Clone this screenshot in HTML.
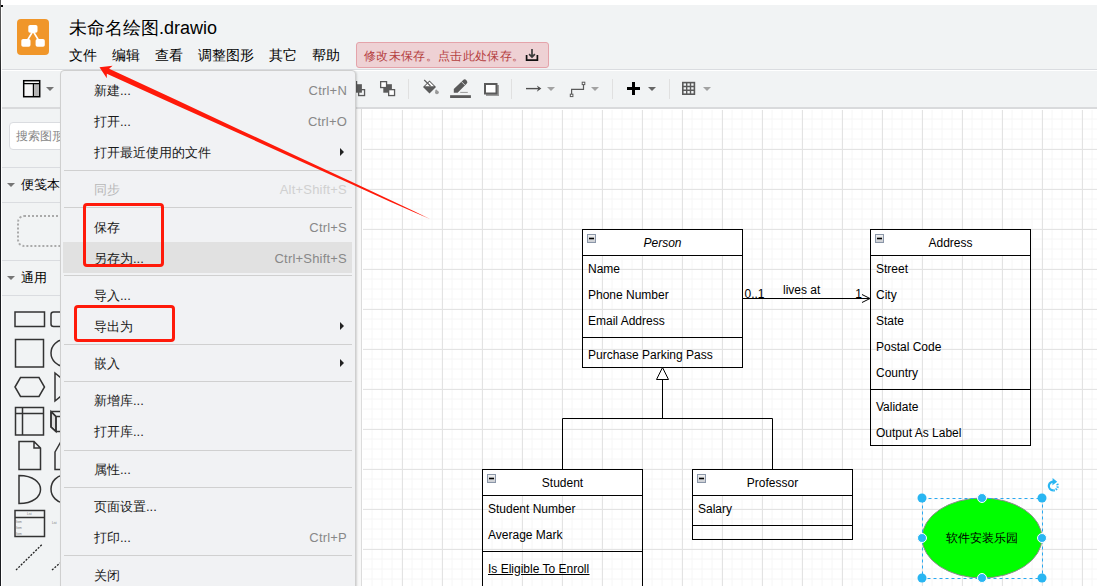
<!DOCTYPE html>
<html><head><meta charset="utf-8">
<style>
*{margin:0;padding:0;box-sizing:border-box}
html,body{width:1097px;height:586px;overflow:hidden;background:#fff;font-family:"Liberation Sans",sans-serif;position:relative}
.a{position:absolute}
#app{left:2px;top:5px;width:1095px;height:581px;background:#f1f3f4}
#lcol{left:0;top:0;width:1px;height:586px;background:linear-gradient(#5c5c5c 0,#4a4a4a 40px,#1a1c20 80px,#1a1c20 100%)}
#dot{left:1px;top:5px;width:2px;height:2px;background:#000}
.title{left:69px;top:15.5px;font-size:18px;color:#000;white-space:nowrap;line-height:24px}
.mi{top:46.5px;font-size:14px;color:#000;line-height:17px;white-space:nowrap}
.hl{height:1px;background:#dadce0}
#canvas{left:362px;top:109px;width:735px;height:477px;background:#fff}
.menu{left:60px;top:70px;width:296px;height:530px;background:#f1f2f4;border:1px solid #cfcfcf;border-radius:4px;box-shadow:1px 1px 2px rgba(0,0,0,.15)}
.it{left:94px;font-size:13px;color:#333;white-space:nowrap;line-height:16px}
.sc{right:750px;font-size:13px;color:#888;white-space:nowrap;line-height:16px;letter-spacing:.2px}
.sep{left:64px;width:288px;height:1px;background:#d0d0d0}
.arr{left:340px;width:0;height:0;border-top:4px solid transparent;border-bottom:4px solid transparent;border-left:4px solid #222}
.red{border:3px solid #ff1a0a;border-radius:4px}
.ut{font-size:12px;color:#000;white-space:nowrap;line-height:14px}
</style></head><body>
<div id="app" class="a"></div>
<div id="lcol" class="a"></div>
<div id="dot" class="a"></div>

<!-- logo -->
<svg class="a" style="left:17px;top:19px" width="32" height="36" viewBox="0 0 32 36">
<rect x="0" y="0" width="32" height="36" rx="4" fill="#f0962a"/>
<path d="M16 12 L10 22 M16 12 L22 22" stroke="#fff" stroke-width="1.6" fill="none"/>
<rect x="11.3" y="6" width="9.2" height="7.8" rx="1.8" fill="#fff"/>
<rect x="4.3" y="20" width="9.2" height="7.7" rx="1.8" fill="#fff"/>
<rect x="18.6" y="20" width="9.2" height="7.7" rx="1.8" fill="#fff"/>
</svg>
<div class="a title">未命名绘图.drawio</div>
<div class="a mi" style="left:69px">文件</div>
<div class="a mi" style="left:112px">编辑</div>
<div class="a mi" style="left:155px">查看</div>
<div class="a mi" style="left:198px">调整图形</div>
<div class="a mi" style="left:269px">其它</div>
<div class="a mi" style="left:312px">帮助</div>
<div class="a" style="left:356px;top:42px;width:193px;height:26px;background:#eed1d4;border:1px solid #e4a3aa;border-radius:3px"></div>
<div class="a" style="left:364px;top:48px;font-size:12px;color:#b5403f;line-height:16px;white-space:nowrap;letter-spacing:.35px">修改未保存。点击此处保存。</div>
<svg class="a" style="left:520px;top:44px" width="24" height="20" viewBox="520 44 24 20"><path d="M526.6 55 V60.2 H537.4 V55" stroke="#111" stroke-width="1.7" fill="none"/><path d="M532 49 V57 M529.1 54.2 L532 57.1 L534.9 54.2" stroke="#3a3a3a" stroke-width="1.7" fill="none"/></svg>

<div class="a hl" style="left:2px;top:69px;width:1095px"></div>
<div class="a" style="left:2px;top:70px;width:1095px;height:1px;background:#fff"></div>
<div class="a" style="left:2px;top:107px;width:1095px;height:2px;background:#d9dadc"></div>


<!-- toolbar left -->
<svg class="a" style="left:20px;top:77px" width="24" height="24" viewBox="20 77 24 24">
<rect x="23.7" y="80.7" width="16" height="16" fill="#f6f6f6" stroke="#000" stroke-width="1.5"/>
<rect x="33.8" y="84" width="5.2" height="12" fill="#b4b4b4"/>
<path d="M23.7 83.6 H39.7 M33.4 83.6 V96.7" stroke="#000" stroke-width="1.2"/>
</svg>
<div class="a" style="left:46px;top:87px;width:0;height:0;border-left:4px solid transparent;border-right:4px solid transparent;border-top:4px solid #757575"></div>

<!-- sidebar -->
<div class="a" style="left:9px;top:122px;width:80px;height:28px;background:#fff;border:1px solid #dadce0;border-radius:4px"></div>
<div class="a" style="left:16px;top:128px;font-size:12px;color:#888;line-height:16px;white-space:nowrap">搜索图形</div>
<div class="a hl" style="left:2px;top:167px;width:353px"></div>
<div class="a" style="left:7px;top:183px;width:0;height:0;border-left:4px solid transparent;border-right:4px solid transparent;border-top:4px solid #757575"></div>
<div class="a" style="left:21px;top:177px;font-size:13px;color:#000;line-height:16px;white-space:nowrap">便笺本</div>
<div class="a hl" style="left:2px;top:202px;width:353px"></div>
<div class="a" style="left:17px;top:215px;width:60px;height:32px;border:2px dotted #aaa;border-radius:7px"></div>
<div class="a hl" style="left:2px;top:260px;width:353px"></div>
<div class="a" style="left:7px;top:276px;width:0;height:0;border-left:4px solid transparent;border-right:4px solid transparent;border-top:4px solid #757575"></div>
<div class="a" style="left:21px;top:270px;font-size:13px;color:#000;line-height:16px;white-space:nowrap">通用</div>
<div class="a hl" style="left:2px;top:295px;width:353px"></div>
<svg class="a" style="left:0;top:300px" width="62" height="286" viewBox="0 300 62 286">
<g fill="none" stroke="#333" stroke-width="1.5">
<rect x="15" y="312" width="29.5" height="14.5"/>
<rect x="51" y="312" width="20" height="14.5" rx="2.5"/>
<rect x="15.5" y="339.5" width="28" height="27.5"/>
<ellipse cx="65" cy="353" rx="14" ry="13.5"/>
<path d="M15 387 L20.5 377.5 H39 L44.5 387 L39 396.5 H20.5 Z"/>
<path d="M55 373 L72 387 L55 401 Z"/>
<rect x="15.5" y="407.5" width="28" height="27.5"/>
<path d="M15.5 413.5 H43.5 M22.5 407.5 V435"/>
<path d="M51 411.5 L56 416.5 V431.5 L51 427 Z" fill="#dedede"/><path d="M51 411.5 H64 M51 411.5 V427 L56 431.5 H64 M51 411.5 L56 416.5 H64 M56 416.5 V431.5"/>
<path d="M19 441.5 H34 L40.5 448 V469.5 H19 Z M34 441.5 V448 H40.5"/>
<path d="M55 452 L61 441.5 H70 V469.5 H55 Z"/>
<path d="M19 475.5 C47.7 475.5 47.7 503.5 19 503.5 Z"/>
<ellipse cx="65" cy="489" rx="14" ry="14"/>
<rect x="15" y="510.5" width="29.5" height="26"/>
<path d="M15 517.5 H44.5"/>
</g>
<g fill="none" stroke="#222" stroke-width="1.3" stroke-dasharray="2 1.4">
<path d="M16 570 L42 544.5"/>
<path d="M52 570 L60 563"/>
</g>
<g font-size="3" fill="#777" font-family="Liberation Sans, sans-serif"><text x="27" y="515">List</text><text x="16" y="523">Item</text><text x="16" y="529">Item</text><text x="16" y="535">Item</text><text x="52" y="524">List</text></g>
</svg>

<!-- splitter -->
<div class="a" style="left:355px;top:109px;width:1px;height:477px;background:#d6d6d6"></div>
<div class="a" style="left:356px;top:109px;width:5px;height:477px;background:#f8f8f8"></div>
<div class="a" style="left:361px;top:109px;width:1px;height:477px;background:#dcdcdc"></div>
<svg id="cv" class="a" style="left:362px;top:109px" width="735" height="477" viewBox="362 109 735 477">
<defs>
<pattern id="gmin" x="362" y="109" width="10" height="10" patternUnits="userSpaceOnUse"><path d="M0 0 H10 M0 0 V10 M0 10 H10 M10 0 V10" stroke="#f6f6f6" stroke-width="1" fill="none"/></pattern>
<pattern id="gmaj" x="362" y="109" width="40" height="40" patternUnits="userSpaceOnUse"><path d="M0 0.5 H40 M0.5 0 V40" stroke="#e3e3e3" stroke-width="1" fill="none"/></pattern>
<linearGradient id="cg" x1="0" y1="0" x2="0" y2="1"><stop offset="0" stop-color="#f4f4f4"/><stop offset="1" stop-color="#c8cbd0"/></linearGradient>
</defs>
<rect x="362" y="109" width="735" height="477" fill="#fff"/>
<rect x="363" y="110" width="734" height="476" fill="url(#gmin)"/>
<rect x="363" y="110" width="734" height="476" fill="url(#gmaj)"/>

<g font-family="Liberation Sans" font-size="12" fill="#000">
<!-- Person -->
<rect x="582.5" y="229.5" width="160" height="26" fill="#fff" stroke="none"/>
<rect x="582.5" y="229.5" width="160" height="138" fill="none" stroke="#000" stroke-width="1"/>
<path d="M582.5 255.5 H742.5 M582.5 337.5 H742.5" stroke="#000" stroke-width="1"/>
<rect x="587.5" y="234.5" width="8" height="8" fill="url(#cg)" stroke="#8a96a8" stroke-width="1"/><path d="M589 238.5 H594" stroke="#000" stroke-width="1.6"/>
<text x="662.5" y="247" text-anchor="middle" font-style="italic">Person</text>
<text x="588" y="273">Name</text>
<text x="588" y="299">Phone Number</text>
<text x="588" y="325">Email Address</text>
<text x="588" y="359">Purchase Parking Pass</text>
<!-- Address -->
<rect x="870.5" y="229.5" width="160" height="26" fill="#fff" stroke="none"/>
<rect x="870.5" y="229.5" width="160" height="216" fill="none" stroke="#000" stroke-width="1"/>
<path d="M870.5 255.5 H1030.5 M870.5 389.5 H1030.5" stroke="#000" stroke-width="1"/>
<rect x="875.5" y="234.5" width="8" height="8" fill="url(#cg)" stroke="#8a96a8" stroke-width="1"/><path d="M877 238.5 H882" stroke="#000" stroke-width="1.6"/>
<text x="950.5" y="247" text-anchor="middle">Address</text>
<text x="876" y="273">Street</text>
<text x="876" y="299">City</text>
<text x="876" y="325">State</text>
<text x="876" y="351">Postal Code</text>
<text x="876" y="377">Country</text>
<text x="876" y="411">Validate</text>
<text x="876" y="437">Output As Label</text>
<!-- Student -->
<rect x="482.5" y="469.5" width="160" height="26" fill="#fff" stroke="none"/>
<rect x="482.5" y="469.5" width="160" height="140" fill="none" stroke="#000" stroke-width="1"/>
<path d="M482.5 495.5 H642.5 M482.5 551.5 H642.5" stroke="#000" stroke-width="1"/>
<rect x="487.5" y="474.5" width="8" height="8" fill="url(#cg)" stroke="#8a96a8" stroke-width="1"/><path d="M489 478.5 H494" stroke="#000" stroke-width="1.6"/>
<text x="562.5" y="487" text-anchor="middle">Student</text>
<text x="488" y="513">Student Number</text>
<text x="488" y="539">Average Mark</text>
<text x="488" y="573">Is Eligible To Enroll</text>
<path d="M488 574.5 H512.8 M521 574.5 H589.5" stroke="#000" stroke-width="1"/>
<!-- Professor -->
<rect x="692.5" y="469.5" width="160" height="26" fill="#fff" stroke="none"/>
<rect x="692.5" y="469.5" width="160" height="70" fill="none" stroke="#000" stroke-width="1"/>
<path d="M692.5 495.5 H852.5 M692.5 525.5 H852.5" stroke="#000" stroke-width="1"/>
<rect x="697.5" y="474.5" width="8" height="8" fill="url(#cg)" stroke="#8a96a8" stroke-width="1"/><path d="M699 478.5 H704" stroke="#000" stroke-width="1.6"/>
<text x="772.5" y="487" text-anchor="middle">Professor</text>
<text x="698" y="513">Salary</text>
<!-- edges -->
<path d="M742.5 298.5 H869" stroke="#000" stroke-width="1" fill="none"/>
<path d="M862 294.5 L870 298.5 L862 302.5" stroke="#000" stroke-width="1" fill="none"/>
<text x="744.5" y="298">0..1</text>
<text x="862" y="298" text-anchor="end">1</text>
<text x="783" y="294">lives at</text>
<path d="M662.5 379.5 V418.5 M562.5 469.5 V418.5 H772.5 V469.5" stroke="#000" stroke-width="1" fill="none"/>
<path d="M662.5 367.5 L668.5 379.5 H656.5 Z" stroke="#000" stroke-width="1" fill="#fff"/>
<!-- ellipse -->
<ellipse cx="982" cy="538" rx="60" ry="40" fill="#00ff00" stroke="#8c8c8c" stroke-width="1"/>
<text x="982" y="542" text-anchor="middle" font-size="12">软件安装乐园</text>
<rect x="922.5" y="498.5" width="120" height="80" fill="none" stroke="#29a8f0" stroke-width="1" stroke-dasharray="3 3"/>
<g fill="#29b6f2"><circle cx="922" cy="498" r="4.5"/><circle cx="1042" cy="498" r="4.5"/><circle cx="922" cy="578" r="4.5"/><circle cx="1042" cy="578" r="4.5"/></g>
<g fill="#29b6f2" stroke="#fff" stroke-width="1"><circle cx="982" cy="498" r="4.5"/><circle cx="982" cy="578" r="4.5"/><circle cx="922" cy="538" r="4.5"/><circle cx="1042" cy="538" r="4.5"/></g>
<g fill="none" stroke="#29b6f2" stroke-width="2.2"><path d="M1054.8 481.9 A4.4 4.4 0 1 0 1053.3 490.4"/><path d="M1053.3 490.4 A4.4 4.4 0 0 0 1057.1 483.8" stroke-dasharray="1.5 1"/></g>
<path d="M1052.6 478 L1057.2 481.8 L1052.4 485.3 Z" fill="#29b6f2"/>
</g>
</svg>

<!-- toolbar icons -->
<svg class="a" style="left:340px;top:72px" width="400" height="34" viewBox="340 72 400 34">
<g stroke="#5a5a5a" stroke-width="1.3">
<rect x="350.65" y="81.65" width="5.9" height="5.9" fill="#fff"/>
<rect x="358.65" y="89.65" width="5.9" height="5.9" fill="none"/>
</g>
<rect x="353.3" y="84.2" width="8.6" height="8.5" fill="#5a5a5a"/>
<rect x="383.3" y="84.2" width="8.6" height="8.5" fill="#5a5a5a"/>
<g stroke="#5a5a5a" stroke-width="1.3">
<rect x="380.65" y="81.65" width="5.9" height="5.9" fill="#fff"/>
<rect x="388.65" y="89.65" width="5.9" height="5.9" fill="#fff"/>
</g>
<g fill="#e0e0e0"><rect x="408" y="79" width="1" height="20"/><rect x="511" y="79" width="1" height="20"/><rect x="612" y="79" width="1" height="20"/><rect x="669" y="79" width="1" height="20"/></g>
<!-- fill -->
<path d="M423 87 L429.5 80.5 L436 87 L429.5 93.5 Z" fill="#5a5a5a"/>
<path d="M425 86.2 L429.5 81.8 L434 86.2 Z" fill="#fff"/>
<path d="M424.2 80 L430.5 86" stroke="#5a5a5a" stroke-width="1.1"/>
<circle cx="436.9" cy="92.3" r="1.9" fill="#9a9a9a"/>
<path d="M436.2 89.2 L437.6 91.2 H434.8 Z" fill="#9a9a9a"/>
<!-- pencil -->
<path d="M453.8 89 V92.8 H457.6 L466.6 83.8 A2.4 2.4 0 0 0 466.6 80.4 L466.4 80.2 A2.4 2.4 0 0 0 463 80.2 Z" fill="#5a5a5a"/>
<path d="M461.3 81.5 L465.1 85.3" stroke="#f1f3f4" stroke-width="0.8"/>
<rect x="460.2" y="91.9" width="7.6" height="1" fill="#9a9a9a"/>
<rect x="450.1" y="95.2" width="20.8" height="2.8" fill="#5a5a5a"/>
<!-- shadow -->
<rect x="486" y="85" width="13" height="11" fill="#9a9a9a"/>
<rect x="485" y="84" width="11.5" height="9.5" fill="#fff" stroke="#5a5a5a" stroke-width="2"/>
<!-- arrow -->
<path d="M526 88.6 H540" stroke="#505050" stroke-width="1.4"/>
<path d="M536.8 85.4 L541.4 88.6 L536.8 91.8 L538.3 88.6 Z" fill="#505050"/>
<path d="M547 87 H555 L551 91 Z" fill="#a2a2a2"/>
<!-- waypoint -->
<path d="M571.6 94 V89.3 H583.5 V84.5" stroke="#5a5a5a" stroke-width="1.2" fill="none"/>
<rect x="570.3" y="94.2" width="2.6" height="2.4" fill="#fff" stroke="#5a5a5a" stroke-width="1"/>
<rect x="582.2" y="82.2" width="2.6" height="2.4" fill="#fff" stroke="#5a5a5a" stroke-width="1"/>
<path d="M591 87 H599 L595 91 Z" fill="#a2a2a2"/>
<!-- plus -->
<path d="M627 88.5 H640 M633.5 82 V95" stroke="#000" stroke-width="3"/>
<path d="M648 87 H656 L652 91 Z" fill="#666"/>
<!-- table -->
<rect x="682.8" y="82.6" width="11.6" height="11.6" fill="none" stroke="#5a5a5a" stroke-width="1.6"/>
<path d="M686.7 82.6 V94.2 M690.5 82.6 V94.2 M682.8 86.5 H694.4 M682.8 90.3 H694.4" stroke="#5a5a5a" stroke-width="1.4"/>
<path d="M703 87 H711 L707 91 Z" fill="#a2a2a2"/>
</svg>
<!-- menu -->
<div class="a menu"></div>
<div class="a" style="left:63px;top:242px;width:289px;height:31px;background:#e1e1e1"></div>
<div class="a sep" style="top:170px"></div>
<div class="a sep" style="top:207px"></div>
<div class="a sep" style="top:275px"></div>
<div class="a sep" style="top:344px"></div>
<div class="a sep" style="top:381px"></div>
<div class="a sep" style="top:450px"></div>
<div class="a sep" style="top:487px"></div>
<div class="a sep" style="top:555px"></div>
<div class="a it" style="top:83px;color:#1a1a1a">新建...</div>
<div class="a sc" style="top:83px;color:#888">Ctrl+N</div>
<div class="a it" style="top:114px;color:#1a1a1a">打开...</div>
<div class="a sc" style="top:114px;color:#888">Ctrl+O</div>
<div class="a it" style="top:145px;color:#1a1a1a">打开最近使用的文件</div>
<div class="a arr" style="top:148px"></div>
<div class="a it" style="top:181.5px;color:#b8b8b8">同步</div>
<div class="a sc" style="top:181.5px;color:#d0d0d0">Alt+Shift+S</div>
<div class="a it" style="top:220px;color:#1a1a1a">保存</div>
<div class="a sc" style="top:220px;color:#888">Ctrl+S</div>
<div class="a it" style="top:251px;color:#1a1a1a">另存为...</div>
<div class="a sc" style="top:251px;color:#888">Ctrl+Shift+S</div>
<div class="a it" style="top:288px;color:#1a1a1a">导入...</div>
<div class="a it" style="top:319px;color:#1a1a1a">导出为</div>
<div class="a arr" style="top:322px"></div>
<div class="a it" style="top:356px;color:#1a1a1a">嵌入</div>
<div class="a arr" style="top:359px"></div>
<div class="a it" style="top:393px;color:#1a1a1a">新增库...</div>
<div class="a it" style="top:424px;color:#1a1a1a">打开库...</div>
<div class="a it" style="top:462px;color:#1a1a1a">属性...</div>
<div class="a it" style="top:499px;color:#1a1a1a">页面设置...</div>
<div class="a it" style="top:530px;color:#1a1a1a">打印...</div>
<div class="a sc" style="top:530px;color:#888">Ctrl+P</div>
<div class="a it" style="top:568px;color:#1a1a1a">关闭</div>
<div class="a red" style="left:82.5px;top:202.5px;width:81px;height:64px"></div>
<div class="a red" style="left:74px;top:305px;width:101px;height:37px"></div>
<svg class="a" style="left:0;top:0" width="1097" height="586" viewBox="0 0 1097 586">
<path d="M99.50 67.30 L112.56 65.70 L109.13 68.75 L176.02 99.74 L240.77 130.14 L300.61 158.05 L350.46 181.33 L390.33 199.97 L415.19 211.77 L430.50 219.30 L414.81 212.59 L389.67 201.43 L349.54 183.33 L299.39 160.69 L239.23 133.50 L173.98 104.20 L106.87 73.66 L106.80 78.24 Z" fill="#ff1a0a"/>
</svg>
</body></html>
